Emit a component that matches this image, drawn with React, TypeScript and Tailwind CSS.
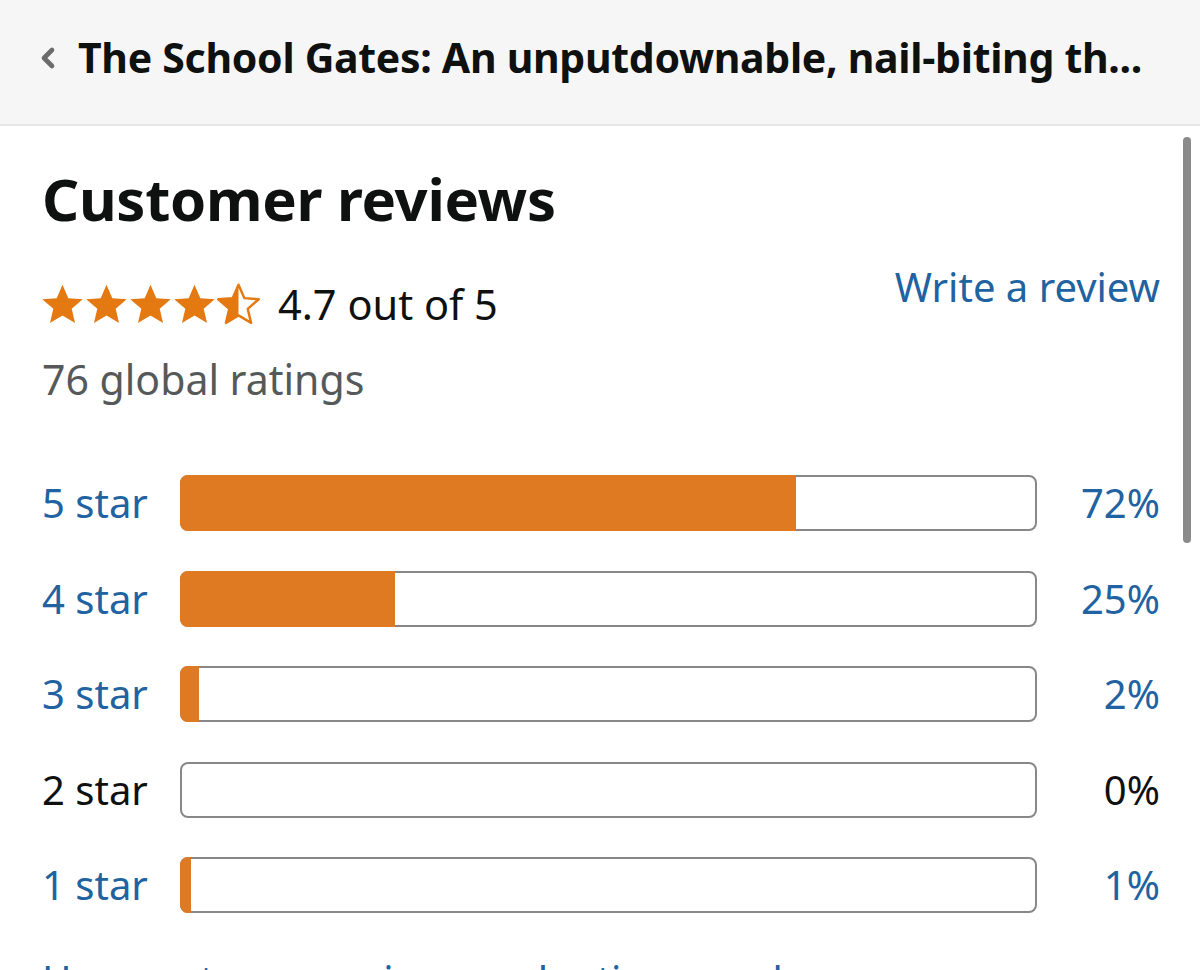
import { ChevronLeft } from 'lucide-react';

const ROWS = [
  { label: '5 star', pct: 72 },
  { label: '4 star', pct: 25 },
  { label: '3 star', pct: 2 },
  { label: '2 star', pct: 0 },
  { label: '1 star', pct: 1 },
];

const STAR = 'M12 1.5l3.1 7.1 7.7.6-5.9 5.1 1.8 7.5L12 17.8l-6.7 4 1.8-7.5L1.2 9.2l7.7-.6z';

function Star({ half }: { half?: boolean }) {
  return (
    <svg viewBox="0 0 24 24" className="w-[45px] h-[45px] -mr-[1px]">
      <defs>
        <clipPath id="halfclip">
          <rect x="0" y="0" width="12" height="24" />
        </clipPath>
      </defs>
      {half ? (
        <>
          <path d={STAR} fill="none" stroke="#e47911" strokeWidth="1.3" strokeLinejoin="round" />
          <path d={STAR} fill="#e47911" clipPath="url(#halfclip)" />
        </>
      ) : (
        <path d={STAR} fill="#e47911" />
      )}
    </svg>
  );
}

export default function App() {
  return (
    <div className="relative w-[1200px] h-[970px] overflow-hidden bg-white text-[#0f1111] font-['Noto_Sans',sans-serif]">
      {/* top bar */}
      <div className="h-[126px] bg-[#f6f6f6] border-b-2 border-[#e6e6e6] flex items-center pl-[32px] pb-[8px]">
        <ChevronLeft className="w-[32px] h-[32px] text-[#6b6b6b]" strokeWidth={3.5} />
        <h1 className="ml-[14px] text-[41px] font-bold whitespace-nowrap tracking-[-0.3px]">
          The School Gates: An unputdownable, nail-biting th...
        </h1>
      </div>

      {/* scrollbar */}
      <div className="absolute right-[9px] top-[137px] w-[8px] h-[406px] rounded-full bg-[#8a8a8a]" />

      <div className="pl-[42px] pr-[40px]">
        <h2 className="mt-[33px] text-[58px] font-bold leading-[80px] tracking-[-0.3px]">Customer reviews</h2>

        <div className="mt-[40px] flex items-start justify-between">
          <div>
            <div className="flex items-center">
              <div className="flex -ml-[2px]">
                <Star />
                <Star />
                <Star />
                <Star />
                <Star half />
              </div>
              <span className="ml-[18px] text-[41.5px] leading-[50px]">4.7 out of 5</span>
            </div>
            <div className="mt-[25px] text-[41px] leading-[50px] text-[#565959]">76 global ratings</div>
          </div>
          <a className="text-[40px] leading-[50px] text-[#2162a1] -mt-[17px]">Write a review</a>
        </div>

        <div className="mt-[71px] flex flex-col gap-[39.5px]">
          {ROWS.map((r) => {
            const color = r.pct > 0 ? 'text-[#2162a1]' : 'text-[#0f1111]';
            return (
              <div key={r.label} className="flex items-center h-[56px]">
                <span className={`w-[138px] text-[40px] leading-[50px] ${color}`}>{r.label}</span>
                <div className="relative flex-1 h-[56px] rounded-[8px] border-2 border-[#888888] bg-white">
                  {r.pct > 0 && (
                    <div
                      className="absolute -top-[2px] -bottom-[2px] -left-[2px] rounded-l-[8px] bg-[#e07a22]"
                      style={{ width: `calc(${r.pct}% + 2px)` }}
                    />
                  )}
                </div>
                <span className={`w-[123px] text-right text-[40px] leading-[50px] ${color}`}>{r.pct}%</span>
              </div>
            );
          })}
        </div>

        <div className="mt-[42px] text-[40px] leading-[50px] text-[#2162a1]">How customer reviews and ratings work</div>
      </div>
    </div>
  );
}
